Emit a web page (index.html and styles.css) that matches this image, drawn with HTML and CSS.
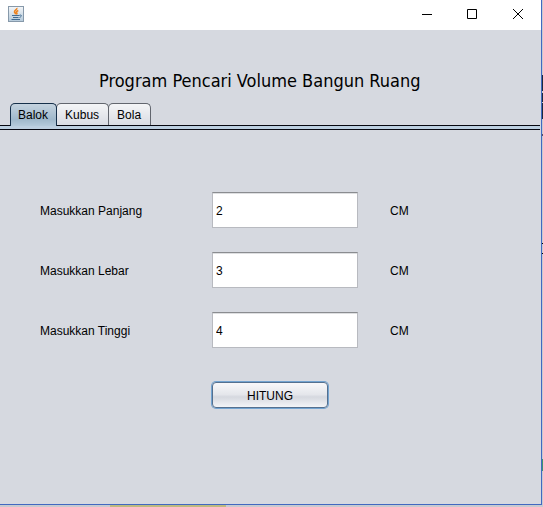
FILE: index.html
```html
<!DOCTYPE html>
<html lang="id">
<head>
<meta charset="utf-8">
<title>Volume Bangun Ruang</title>
<link rel="stylesheet" href="styles.css">
</head>
<body>
<div class="window">
  <header class="titlebar">
    <svg class="app-icon" width="16" height="16" viewBox="0 0 16 16" aria-hidden="true">
      <defs><linearGradient id="tile" x1="0" y1="0" x2="0" y2="1"><stop offset="0" stop-color="#f4f6f8"/><stop offset="1" stop-color="#b4cadb"/></linearGradient></defs>
      <rect x=".5" y=".5" width="15" height="15" fill="url(#tile)" stroke="#8799aa"/>
      <path d="M8.700 2c1 1.700-2.700 2-2.200 4 .2.800 1.200 1.300 1 2.300M10.300 4.500c-1.900.900-2.300 1.600-1.500 2.400.4.500.2 1-.4 1.500" fill="none" stroke="#ee8420" stroke-width="1.600"/>
      <path d="M4 9.500h7.500M5 11.500h5.500M3.500 13.500h8.500M11.500 9.300c2.500-1 2.500 1.400 0 2.200" fill="none" stroke="#426c92"/>
    </svg>
    <div class="window-buttons">
      <button class="window-button" type="button" aria-label="Minimize"><svg width="12" height="12" viewBox="0 0 12 12"><path d="M2 6.500h10"/></svg></button>
      <button class="window-button" type="button" aria-label="Maximize"><svg width="12" height="12" viewBox="0 0 12 12"><path d="M1.500 1.500h9v9h-9z"/></svg></button>
      <button class="window-button" type="button" aria-label="Close"><svg width="12" height="12" viewBox="0 0 12 12"><path d="M1 1l10 10M11 1L1 11"/></svg></button>
    </div>
  </header>
  <main class="content">
    <h1 class="heading">Program Pencari Volume Bangun Ruang</h1>
    <div class="tabs" role="tablist">
      <button class="tab tab-active" type="button" role="tab" aria-selected="true">Balok</button>
      <button class="tab" type="button" role="tab" aria-selected="false">Kubus</button>
      <button class="tab" type="button" role="tab" aria-selected="false">Bola</button>
    </div>
    <div class="tab-line"></div>
    <form class="form">
      <label for="panjang">Masukkan Panjang</label>
      <input class="field" id="panjang" type="text" value="2">
      <span>CM</span>
      <label for="lebar">Masukkan Lebar</label>
      <input class="field" id="lebar" type="text" value="3">
      <span>CM</span>
      <label for="tinggi">Masukkan Tinggi</label>
      <input class="field" id="tinggi" type="text" value="4">
      <span>CM</span>
      <button class="submit" type="button">HITUNG</button>
    </form>
  </main>
</div>
</body>
</html>
```

FILE: styles.css
```css
* {
  box-sizing: border-box;
}

body {
  margin: 0;
  height: 100vh;
  padding: 0 1px 2px 0;
  background:
    linear-gradient(#1d2a3c, #1d2a3c) right 75px / 1px 16px no-repeat,
    linear-gradient(#1d2a3c, #1d2a3c) right 93px / 1px 9px no-repeat,
    linear-gradient(#1d2a3c, #1d2a3c) right 103px / 1px 16px no-repeat,
    linear-gradient(#5c5060, #5c5060) right 134px / 1px 2px no-repeat,
    linear-gradient(#000, #000) right 243px / 1px 1px no-repeat,
    linear-gradient(#000, #000) right 253px / 1px 1px no-repeat,
    linear-gradient(#3f9270, #3f9270) right 459px / 1px 12px no-repeat,
    linear-gradient(#bfba80, #bfba80) 110px bottom / 116px 2px no-repeat,
    #c8cad0;
  color: #000;
  font-family: "Liberation Sans", Arial, sans-serif;
  font-size: 12px;
  line-height: 16px;
}

button,
input {
  font: inherit;
  color: inherit;
}

.window {
  display: flex;
  flex-direction: column;
  height: 100%;
  border: solid #4169c1;
  border-width: 0 1px 1px 0;
  background: #d6d9e0;
}

.titlebar {
  display: flex;
  justify-content: space-between;
  height: 30px;
  padding-left: 8px;
  background: #fff;
}

.app-icon {
  margin-top: 6px;
}

.window-buttons {
  display: flex;
}

.window-button {
  display: flex;
  align-items: center;
  justify-content: center;
  width: 46px;
  height: 28px;
  padding: 0;
  border: 0;
  background: none;
}

.window-button path {
  fill: none;
  stroke: #000;
}

.content {
  flex: 1;
}

.heading {
  margin: 0;
  padding: 40px 0 0 99px;
  font: 18px/22px "DejaVu Sans Condensed", Tahoma, sans-serif;
  white-space: nowrap;
}

.tabs {
  display: flex;
  padding: 11px 10px 0;
}

.tab {
  height: 22px;
  padding: 1px 9px 0 8px;
  border: 1px solid #62666e;
  border-bottom: 0;
  border-radius: 5px 5px 0 0;
  background: linear-gradient(#f4f5f7, #d9dce3);
}

.tab + .tab {
  margin-left: -1px;
}

.tab-active {
  height: 23px;
  margin-bottom: -1px;
  padding: 0 8px 0 7px;
  border-color: #16304a;
  background: linear-gradient(#c5d3df, #9fb8cb 70%, #b4cadb);
  position: relative;
}

.tab-line {
  height: 5px;
  margin-right: 1px;
  border: solid #05060f;
  border-width: 1px 0;
  background: #bccfe0;
}

.form {
  display: grid;
  grid-template-columns: 172px 146px auto;
  grid-auto-rows: 36px;
  row-gap: 24px;
  align-items: center;
  padding: 62px 0 0 40px;
}

.form label,
.form span {
  padding-top: 2px;
}

.form span {
  padding-left: 32px;
}

.field {
  width: 100%;
  height: 36px;
  padding: 2px 3px 0;
  border: 1px solid #b8bac0;
  border-top-color: #8a8c90;
  border-radius: 0;
  background: #fff;
  box-shadow: inset 0 1px #dedfe1;
}

.submit {
  grid-column: 2;
  align-self: end;
  width: 116px;
  height: 26px;
  padding: 2px 0 0;
  border: 1px solid #54708f;
  border-radius: 4px;
  background: linear-gradient(#f8f8fa, #e4e6eb 48%, #d5d8df 58%, #f2f4f7);
  box-shadow: 0 0 0 1px #73a4d1;
}
```
